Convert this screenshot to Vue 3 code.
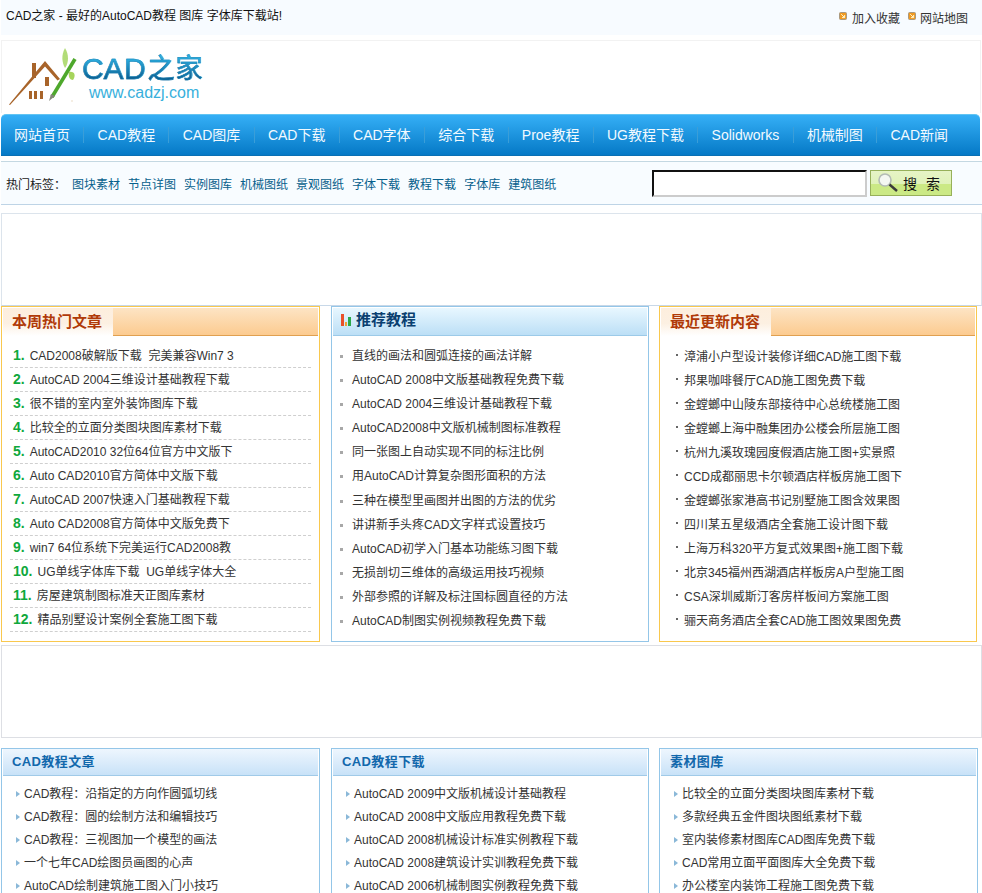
<script setup>
const nav = ['网站首页','CAD教程','CAD图库','CAD下载','CAD字体','综合下载','Proe教程','UG教程下载','Solidworks','机械制图','CAD新闻']
const tags = ['图块素材','节点详图','实例图库','机械图纸','景观图纸','字体下载','教程下载','字体库','建筑图纸']
const hot = ['CAD2008破解版下载  完美兼容Win7 3','AutoCAD 2004三维设计基础教程下载','很不错的室内室外装饰图库下载','比较全的立面分类图块图库素材下载','AutoCAD2010 32位64位官方中文版下','Auto CAD2010官方简体中文版下载','AutoCAD 2007快速入门基础教程下载','Auto CAD2008官方简体中文版免费下','win7 64位系统下完美运行CAD2008教','UG单线字体库下载  UG单线字体大全','房屋建筑制图标准天正图库素材','精品别墅设计案例全套施工图下载']
const rec = ['直线的画法和圆弧连接的画法详解','AutoCAD 2008中文版基础教程免费下载','AutoCAD 2004三维设计基础教程下载','AutoCAD2008中文版机械制图标准教程','同一张图上自动实现不同的标注比例','用AutoCAD计算复杂图形面积的方法','三种在模型里画图并出图的方法的优劣','讲讲新手头疼CAD文字样式设置技巧','AutoCAD初学入门基本功能练习图下载','无损剖切三维体的高级运用技巧视频','外部参照的详解及标注国标圆直径的方法','AutoCAD制图实例视频教程免费下载']
const latest = ['漳浦小户型设计装修详细CAD施工图下载','邦果咖啡餐厅CAD施工图免费下载','金螳螂中山陵东部接待中心总统楼施工图','金螳螂上海中融集团办公楼会所层施工图','杭州九溪玫瑰园度假酒店施工图+实景照','CCD成都丽思卡尔顿酒店样板房施工图下','金螳螂张家港高书记别墅施工图含效果图','四川某五星级酒店全套施工设计图下载','上海万科320平方复式效果图+施工图下载','北京345福州西湖酒店样板房A户型施工图','CSA深圳威斯汀客房样板间方案施工图','骊天商务酒店全套CAD施工图效果图免费']
const bottom = [
  { title: 'CAD教程文章', items: ['CAD教程：沿指定的方向作圆弧切线','CAD教程：圆的绘制方法和编辑技巧','CAD教程：三视图加一个模型的画法','一个七年CAD绘图员画图的心声','AutoCAD绘制建筑施工图入门小技巧'] },
  { title: 'CAD教程下载', items: ['AutoCAD 2009中文版机械设计基础教程','AutoCAD 2008中文版应用教程免费下载','AutoCAD 2008机械设计标准实例教程下载','AutoCAD 2008建筑设计实训教程免费下载','AutoCAD 2006机械制图实例教程免费下载'] },
  { title: '素材图库', items: ['比较全的立面分类图块图库素材下载','多款经典五金件图块图纸素材下载','室内装修素材图库CAD图库免费下载','CAD常用立面平面图库大全免费下载','办公楼室内装饰工程施工图免费下载'] }
]
const marks = ['加入收藏', '网站地图']
</script>

<template>
  <div class="page">
    <header class="top">
      <span class="slogan">CAD之家 - 最好的AutoCAD教程 图库 字体库下载站!</span>
      <div class="toplinks">
        <a v-for="m in marks" :key="m">
          <svg class="sq" width="8" height="8" viewBox="0 0 8 8">
            <rect x=".5" y=".5" width="7" height="7" rx="1" fill="#f09a22" stroke="#a89880"/>
            <path d="M2.2 2.2 L5.4 5.4 M5.6 3 V5.6 H3" fill="none" stroke="#fff2c8" stroke-width="1"/>
          </svg>{{ m }}
        </a>
      </div>
    </header>

    <div class="logobox">
      <svg class="logo" width="78" height="66" viewBox="0 0 78 66">
        <path d="M7 63.5 L43 20 L58 38 L55.5 39.5 L43 25.5 L8 64 Z" fill="#a8642a"/>
        <rect x="30" y="22" width="4" height="15" fill="#a8642a"/>
        <rect x="43" y="36" width="4" height="9" fill="#a8642a"/>
        <rect x="27" y="50" width="3" height="8" fill="#a8642a"/>
        <rect x="32" y="50" width="3" height="8" fill="#a8642a"/>
        <rect x="38" y="50" width="3" height="8" fill="#a8642a"/>
        <path d="M50 56 L73 18" stroke="#4ea82c" stroke-width="3.6" fill="none"/>
        <path d="M47 60 L49 53 L53 55 Z" fill="#85857a"/>
        <path d="M63 7 C59 14 60 22 63 27 C67 22 67 13 63 7 Z" fill="#b2dc78"/>
        <path d="M67 31 C73 30 74 35 71 39 C68 39 66 36 67 31 Z" fill="#a6d45c"/>
        <circle cx="70" cy="60" r=".8" fill="#e8d8c0"/>
      </svg>
      <div class="lgtext">
        <div class="lgt"><span>C</span><span>A</span><span>D</span><span class="cj">之</span><span class="cj">家</span></div>
        <div class="lgu">www.cadzj.com</div>
      </div>
    </div>

    <nav class="nav">
      <a v-for="n in nav" :key="n">{{ n }}</a>
    </nav>

    <div class="tagbar">
      <div class="tags">
        <span class="lab">热门标签：</span>
        <a v-for="t in tags" :key="t">{{ t }}</a>
      </div>
      <div class="search">
        <input class="kw" type="text" />
        <button class="go">
          <svg width="24" height="22" viewBox="0 0 24 22">
            <circle cx="8" cy="8" r="6" fill="#f4f7f2" stroke="#b4bcb6" stroke-width="1.6"/>
            <path d="M12.5 12.5 L20 19" stroke="#3a3a3a" stroke-width="2.4"/>
          </svg>
          <span>搜索</span>
        </button>
      </div>
    </div>

    <div class="ad first"></div>

    <section class="row r1">
      <div class="panel hotp w1">
        <div class="otitle"><h3>本周热门文章</h3></div>
        <ul class="hot">
          <li v-for="(t, i) in hot" :key="t"><b>{{ i + 1 }}.</b><span>{{ t }}</span></li>
        </ul>
      </div>
      <div class="panel blue w2">
        <div class="btitle">
          <svg width="10" height="12" viewBox="0 0 10 12"><rect x="0" y="0" width="3" height="12" fill="#e8502a"/><rect x="4" y="8" width="2" height="4" fill="#f0a030"/><rect x="7" y="3" width="3" height="9" fill="#2aa84a"/></svg>
          <h3>推荐教程</h3>
        </div>
        <ul class="rec">
          <li v-for="t in rec" :key="t">{{ t }}</li>
        </ul>
      </div>
      <div class="panel hotp w3">
        <div class="otitle"><h3>最近更新内容</h3></div>
        <ul class="latest">
          <li v-for="t in latest" :key="t">{{ t }}</li>
        </ul>
      </div>
    </section>

    <div class="ad second"></div>

    <section class="row r2">
      <div v-for="(b, i) in bottom" :key="b.title" class="panel blue2" :class="'b' + i">
        <div class="stitle"><h4>{{ b.title }}</h4></div>
        <ul class="arrow">
          <li v-for="t in b.items" :key="t">{{ t }}</li>
        </ul>
      </div>
    </section>
  </div>
</template>

<style>
html, body { margin: 0; background: #fff; }
</style>

<style scoped>
.page { width: 982px; height: 893px; overflow: hidden; font: 12px/1.5 "Liberation Sans", "Noto Sans CJK SC", sans-serif; color: #333; }
ul { list-style: none; margin: 0; padding: 0; }
h3, h4 { margin: 0; }

.top { height: 35px; margin-left: 1px; background: #f7fbff; display: flex; justify-content: space-between; }
.slogan { color: #111; padding: 7px 0 0 5px; line-height: 18px; }
.toplinks { display: flex; padding: 10px 14px 0 0; line-height: 18px; }
.toplinks a { display: flex; margin-left: 8px; color: #333; }
.sq { display: block; margin: 2px 5px 0 0; flex: none; }
.toplinks a + a .sq { margin-right: 4px; }

.logobox { height: 72px; margin: 5px 1px 0 1px; border: 1px solid #f2f2f2; border-bottom: 0; display: flex; align-items: flex-start; }
.logo { display: block; flex: none; }
.lgtext { margin: 13px 0 0 2px; }
.lgt { display: flex; height: 30px; line-height: 30px; font-size: 30px; background: linear-gradient(#2cb0e2 15%, #0a5c8e 85%); -webkit-background-clip: text; background-clip: text; color: transparent; -webkit-text-stroke: .5px #1a86b8; }
.lgt span { width: 21px; text-align: center; }
.lgt .cj { width: 28px; font-size: 27px; }
.lgt span:nth-child(4) { margin-left: 2px; }
.lgu { margin: 0 0 0 7px; font-size: 16px; line-height: 18px; color: #38b0dc; white-space: nowrap; }

.nav { height: 42px; margin: 1px 2px 0 1px; display: flex; align-items: center; background: linear-gradient(#35aff6, #0579c6); border-top: 1px solid #62c4f2; border-bottom: 1px solid #0a70b4; border-radius: 5px 5px 0 0; box-sizing: border-box; }
.nav a { padding: 0 13.3px; font-size: 14px; line-height: 16px; color: #f2faff; border-left: 1px solid #3a9ed8; white-space: nowrap; }
.nav a:first-child { border-left: 0; padding-left: 13px; }

.tagbar { height: 44px; margin: 5px 0 0 1px; box-sizing: border-box; border-top: 1px solid #c4d8e2; border-bottom: 1px solid #bed4e6; background: #f8fcff; display: flex; justify-content: space-between; }
.tags { display: flex; gap: 8px; padding: 14px 0 0 5px; line-height: 18px; }
.lab { margin-right: -2px; color: #222; }
.tags a { color: #07608c; }
.search { display: flex; gap: 3px; padding: 8px 30px 0 0; height: 27px; }
.kw { width: 215px; height: 27px; padding: 0; box-sizing: border-box; border: 2px inset #b0b0b0; border-color: #666 #ccc #ccc #666; background: #fff; }
.go { width: 82px; height: 26px; padding: 0 0 0 6px; box-sizing: border-box; border: 1px solid #97b05a; background: linear-gradient(#e6f4c6 0, #e0f2ba 54%, #cbe985 56%, #cbe985 100%); display: flex; align-items: center; gap: 2px; font: 14px "Noto Sans CJK SC", sans-serif; color: #111; }
.go span { letter-spacing: 9px; white-space: nowrap; }

.ad { margin-left: 1px; width: 979px; height: 91px; border: 1px solid #dce4ec; border-bottom-color: #c8d8e8; }
.ad.first { margin-top: 8px; }
.ad.second { margin-top: 3px; border-color: #dddfe4; }

.row { display: flex; }
.r1 { margin: 0 0 0 1px; height: 336px; }
.r2 { margin: 10px 0 0 1px; }
.panel { box-sizing: border-box; }
.w1 { width: 319px; }
.w2 { width: 318px; margin-left: 11px; }
.w3 { width: 318px; margin-left: 10px; }

.hotp { border: 1px solid #f9c84e; padding: 1px; height: 336px; }
.otitle { height: 28px; background: linear-gradient(#fde4c4, #fccb90); border-bottom: 1px solid #e0a050; box-sizing: border-box; }
.otitle h3 { width: 110px; height: 28px; padding-left: 9px; box-sizing: border-box; font-size: 15px; line-height: 27px; color: #b03a08; background: linear-gradient(#fdeedd, #fcf0e2 55%, #ffffff); }

.hot { margin: 8px 0 0 7px; width: 301px; }
.hot li { height: 24px; padding-top: 2px; line-height: 21px; border-bottom: 1px dashed #cfcfcf; box-sizing: border-box; display: flex; white-space: pre; overflow: hidden; }
.hot b { color: #0fa83c; font-size: 14px; margin: -1px 5px 0 3px; }

.blue { border: 1px solid #94c6e8; padding: 1px; height: 336px; }
.btitle { height: 28px; background: linear-gradient(#e8f7ff, #bcdff6); border-bottom: 1px solid #9ccae8; box-sizing: border-box; display: flex; align-items: center; gap: 5px; padding: 0 0 3px 8px; }
.btitle h3 { font-size: 15px; color: #0a3f70; line-height: 24px; }

.rec { margin-top: 8px; }
.rec li { height: 24.1px; line-height: 24px; padding-left: 19px; position: relative; white-space: nowrap; }
.rec li::before { content: ""; position: absolute; left: 7px; top: 11px; width: 3px; height: 3px; background: #a8a8a8; }

.latest { margin-top: 9px; }
.latest li { height: 24px; line-height: 24px; padding-left: 23px; position: relative; white-space: nowrap; }
.latest li::before { content: ""; position: absolute; left: 15px; top: 9px; width: 2px; height: 2px; background: #666; }

.blue2 { width: 319px; height: 160px; border: 1px solid #94c6e8; padding: 0 1px; }
.b1 { margin-left: 11px; width: 318px; }
.b2 { margin-left: 10px; width: 319px; }
.stitle { height: 27px; background: linear-gradient(#eef6fe, #c8e2f8); border-bottom: 1px solid #a0cae8; box-sizing: border-box; }
.stitle h4 { font-size: 13px; line-height: 26px; padding-left: 9px; color: #1268ac; letter-spacing: .4px; }
.arrow { margin-top: 7px; }
.arrow li { height: 23px; line-height: 23px; padding-left: 21px; position: relative; white-space: nowrap; }
.arrow li::before { content: ""; position: absolute; left: 13px; top: 8px; border-left: 4px solid #8ab8d8; border-top: 3px solid transparent; border-bottom: 3px solid transparent; }
</style>
